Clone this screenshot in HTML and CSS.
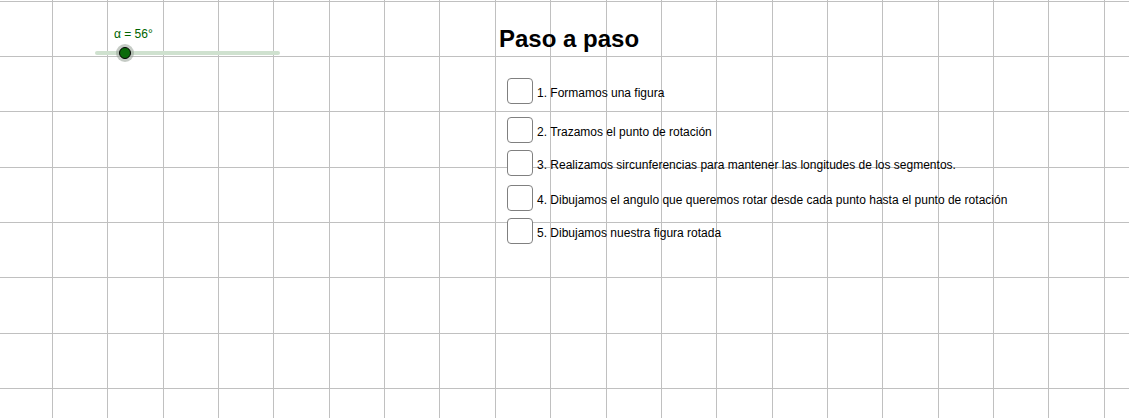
FILE: index.html
```html
<!DOCTYPE html>
<html lang="es">
<head>
<meta charset="utf-8">
<title>Paso a paso</title>
<link rel="stylesheet" href="styles.css">
</head>
<body>
<div class="board">
  <svg class="board__grid" width="1129" height="418" viewBox="0 0 1129 418" aria-hidden="true">
    <g stroke="#c0c0c0" stroke-width="1" shape-rendering="crispEdges">
      <line x1="52.5" y1="0" x2="52.5" y2="418"/>
      <line x1="107.5" y1="0" x2="107.5" y2="418"/>
      <line x1="163.5" y1="0" x2="163.5" y2="418"/>
      <line x1="218.5" y1="0" x2="218.5" y2="418"/>
      <line x1="273.5" y1="0" x2="273.5" y2="418"/>
      <line x1="329.5" y1="0" x2="329.5" y2="418"/>
      <line x1="384.5" y1="0" x2="384.5" y2="418"/>
      <line x1="439.5" y1="0" x2="439.5" y2="418"/>
      <line x1="495.5" y1="0" x2="495.5" y2="418"/>
      <line x1="550.5" y1="0" x2="550.5" y2="418"/>
      <line x1="606.5" y1="0" x2="606.5" y2="418"/>
      <line x1="661.5" y1="0" x2="661.5" y2="418"/>
      <line x1="716.5" y1="0" x2="716.5" y2="418"/>
      <line x1="772.5" y1="0" x2="772.5" y2="418"/>
      <line x1="827.5" y1="0" x2="827.5" y2="418"/>
      <line x1="882.5" y1="0" x2="882.5" y2="418"/>
      <line x1="938.5" y1="0" x2="938.5" y2="418"/>
      <line x1="993.5" y1="0" x2="993.5" y2="418"/>
      <line x1="1048.5" y1="0" x2="1048.5" y2="418"/>
      <line x1="1104.5" y1="0" x2="1104.5" y2="418"/>
      <line x1="0" y1="1.5" x2="1129" y2="1.5"/>
      <line x1="0" y1="56.5" x2="1129" y2="56.5"/>
      <line x1="0" y1="111.5" x2="1129" y2="111.5"/>
      <line x1="0" y1="167.5" x2="1129" y2="167.5"/>
      <line x1="0" y1="222.5" x2="1129" y2="222.5"/>
      <line x1="0" y1="277.5" x2="1129" y2="277.5"/>
      <line x1="0" y1="333.5" x2="1129" y2="333.5"/>
      <line x1="0" y1="388.5" x2="1129" y2="388.5"/>
    </g>
  </svg>

  <div class="board__content">
    <div class="slider">
      <div class="slider__label">α = 56°</div>
      <div class="slider__track">
        <span class="slider__knob"></span>
      </div>
    </div>

    <section class="steps">
      <h1 class="steps__title">Paso a paso</h1>
      <ul class="steps__list">
        <li class="step step--1"><span class="step__box"></span><span class="step__text">1. Formamos una figura</span></li>
        <li class="step step--2"><span class="step__box"></span><span class="step__text">2. Trazamos el punto de rotación</span></li>
        <li class="step step--3"><span class="step__box"></span><span class="step__text">3. Realizamos sircunferencias para mantener las longitudes de los segmentos.</span></li>
        <li class="step step--4"><span class="step__box"></span><span class="step__text">4. Dibujamos el angulo que queremos rotar desde cada punto hasta el punto de rotación</span></li>
        <li class="step step--5"><span class="step__box"></span><span class="step__text">5. Dibujamos nuestra figura rotada</span></li>
      </ul>
    </section>
  </div>
</div>
</body>
</html>
```

FILE: styles.css
```css
html, body {
  margin: 0;
  padding: 0;
  background: #ffffff;
}

body {
  font-family: "Liberation Sans", Arial, sans-serif;
  color: #000000;
}

.board {
  position: relative;
  width: 1129px;
  height: 418px;
  overflow: hidden;
  background: #ffffff;
}

.board__grid {
  position: absolute;
  left: 0;
  top: 0;
  display: block;
}

.board__content {
  position: relative;
  display: flex;
  align-items: flex-start;
  padding-top: 25px;
}

/* Slider */
.slider {
  width: 185px;
  margin-left: 95px;
  padding-top: 2px;
}

.slider__label {
  padding-left: 19px;
  font-size: 12px;
  line-height: 14px;
  color: #006400;
}

.slider__track {
  position: relative;
  height: 4px;
  margin-top: 10px;
  border-radius: 2px;
  background: #cfe1cf;
}

.slider__knob {
  position: absolute;
  left: 24px;
  top: -4px;
  width: 10px;
  height: 10px;
  border-radius: 50%;
  background: #0a6a0a;
  border: 1px solid #000000;
  box-shadow: 0 0 0 3px rgba(150, 160, 150, 0.55);
}

/* Steps */
.steps {
  margin-left: 219px;
}

.steps__title {
  margin: 0;
  font-size: 24px;
  line-height: 28px;
  font-weight: bold;
}

.steps__list {
  list-style: none;
  margin: 25px 0 0 8px;
  padding: 0;
}

.step {
  display: flex;
  align-items: flex-start;
  height: 26px;
}

.step--2 { margin-top: 13px; }
.step--3 { margin-top: 7px; }
.step--4 { margin-top: 9px; }
.step--5 { margin-top: 7px; }

.step__box {
  box-sizing: border-box;
  width: 26px;
  height: 26px;
  flex: none;
  border: 1px solid #808080;
  border-radius: 4px;
  background: #ffffff;
}

.step__text {
  margin-left: 4px;
  padding-top: 8px;
  font-size: 12px;
  line-height: 14px;
  white-space: nowrap;
}
```
